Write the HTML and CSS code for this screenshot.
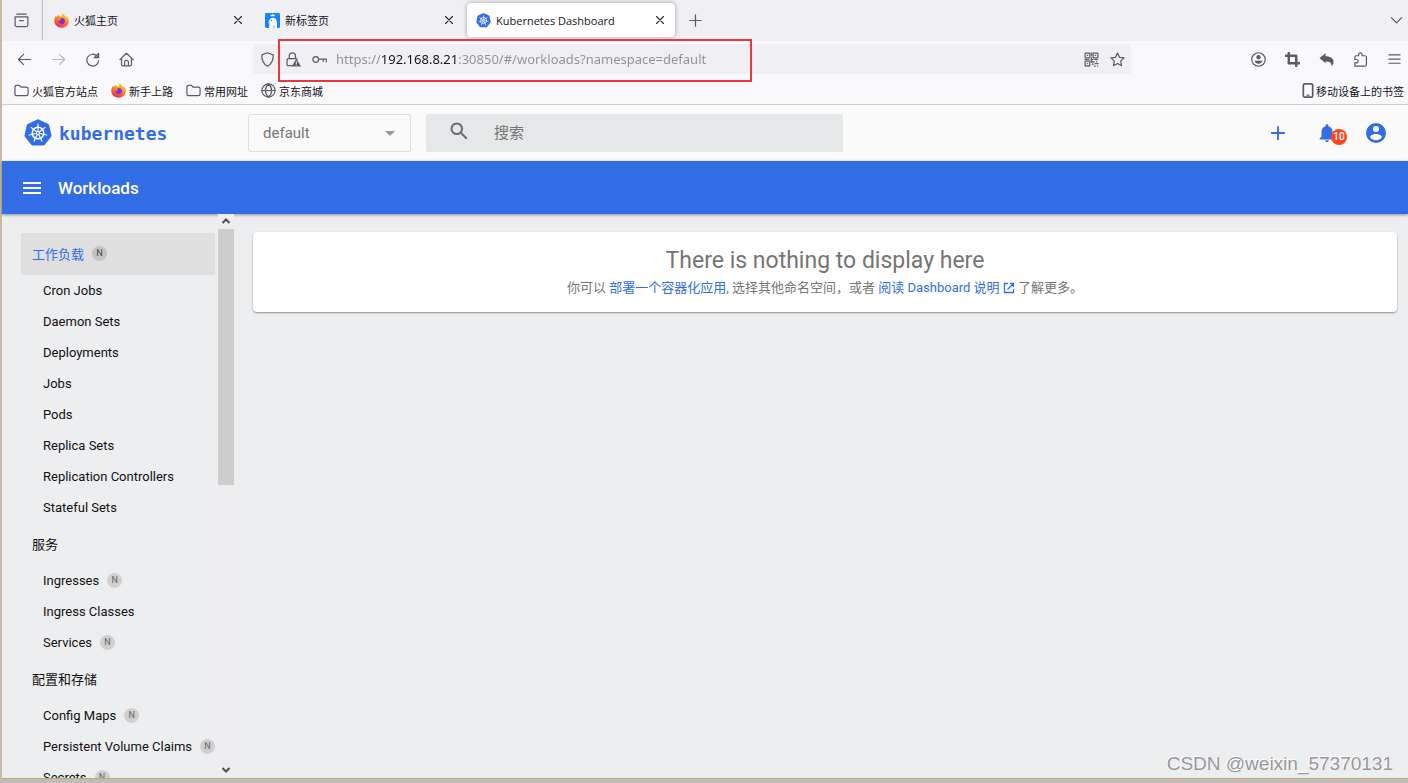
FILE: index.html
```html
<!DOCTYPE html>
<html lang="zh-CN">
<head>
<meta charset="utf-8">
<title>Kubernetes Dashboard</title>
<link rel="stylesheet" href="styles.css">
</head>
<body>
<svg class="defs" aria-hidden="true">
  <defs>
    <linearGradient id="flame" x1="0.8" y1="0" x2="0.3" y2="1">
      <stop offset="0" stop-color="#ffe03a"/><stop offset="0.45" stop-color="#ff8a1f"/><stop offset="1" stop-color="#f5215c"/>
    </linearGradient>
    <symbol id="firefox" viewBox="0 0 16 16">
      <path fill="url(#flame)" d="M9.5.3c1.200.9 1.700 2 2 3 .8.300 1.300.9 1.500 1.500.3-.3.4-.9.300-1.400C15 4.800 15.800 6.700 15.800 8.500c0 4-3.400 7.200-7.700 7.200S.3 12.500.3 8.300c0-2.300.9-3.900 1.900-5.400 0 .6.200 1.100.5 1.400C3.400 3 4.400 2.300 5.400 1.800c-.1.700.2 1.500.7 1.900.9-.2 1.700 0 2.300.3C8.200 2.700 8.500 1.300 9.500.3z"/>
      <circle cx="8.300" cy="8.600" r="3.300" fill="#7a35d8"/>
      <path fill="#ff9f24" d="M4.200 6.500c1.400-1.300 3-.8 3.800.1-1.800.1-2 1-1.900 1.700-1 0-1.700-.8-1.900-1.800z"/>
    </symbol>
    <symbol id="k8s" viewBox="-14 -14 28 28">
      <path fill="#326de6" stroke="#326de6" stroke-width="3.600" stroke-linejoin="round" d="M0-12L9.400-7.500 11.700 2.700 5.200 10.800H-5.200L-11.700 2.700-9.400-7.500z"/>
      <g fill="none" stroke="#fff" stroke-width="1.200" stroke-linecap="round">
        <circle r="5.800" stroke-width="1.500"/>
        <path d="M0 0V-9M0 0L7-5.600M0 0L8.800 2M0 0L3.900 8.100M0 0L-3.900 8.100M0 0L-8.800 2M0 0L-7-5.600"/>
      </g>
      <circle r="1.900" fill="#fff"/><circle r=".9" fill="#326de6"/>
    </symbol>
    <symbol id="close" viewBox="0 0 16 16"><path d="M4 4l8 8M12 4l-8 8"/></symbol>
    <symbol id="folder" viewBox="0 0 16 16"><path d="M1 4.200Q1 2.500 2.700 2.500h3l2 2h5.600q1.700 0 1.700 1.700v5.600q0 1.700-1.700 1.700H2.700Q1 13.500 1 11.800z"/></symbol>
  </defs>
</svg>

<div class="window">
  <div class="tabstrip">
    <button class="icon-btn recent" aria-label="最近浏览"><svg class="line" viewBox="0 0 16 16"><path d="M3 1.200h10M1.200 4.200h13.600v8.300q0 2-2 2H3.200q-2 0-2-2zM6 8.200h4"/></svg></button>
    <div class="tabs">
      <div class="tab">
        <svg class="favicon"><use href="#firefox"/></svg><span class="tab-title">火狐主页</span>
        <button class="tab-close" aria-label="关闭"><svg class="line"><use href="#close"/></svg></button>
      </div>
      <div class="tab">
        <svg class="favicon" viewBox="0 0 16 16"><rect width="16" height="16" rx="1.500" fill="#1684fc"/><path fill="#fff" d="M5.800 1.200l1.200.9L8.200 1l1.200 1.100 1.200-.9-.4 2.300H6.200zM4.300 16c0-2 .5-3.600.4-5.300C3.500 10.600 3.300 9.200 4.300 8.700 4.800 6.400 6.300 5 8.400 5c2.700 0 4.300 2 4.300 4.800V16z"/><path fill="#a9d3ff" d="M8 16c0-2 1-3.500 2.400-3.500V16z"/><circle cx="6.900" cy="8" r=".7" fill="#1684fc"/></svg><span class="tab-title">新标签页</span>
        <button class="tab-close" aria-label="关闭"><svg class="line"><use href="#close"/></svg></button>
      </div>
      <div class="tab tab-active">
        <svg class="favicon"><use href="#k8s"/></svg><span class="tab-title">Kubernetes Dashboard</span>
        <button class="tab-close" aria-label="关闭"><svg class="line"><use href="#close"/></svg></button>
      </div>
    </div>
    <button class="icon-btn" aria-label="新建标签页"><svg class="line" viewBox="0 0 16 16"><path d="M8 2v12M2 8h12"/></svg></button>
    <button class="icon-btn push" aria-label="列出所有标签页"><svg class="line" viewBox="0 0 16 16"><path d="M2.500 5l5.500 5.500L13.500 5"/></svg></button>
  </div>

  <div class="toolbar">
    <div class="nav-buttons">
      <button class="icon-btn" aria-label="后退"><svg class="line" viewBox="0 0 16 16"><path d="M14.500 8H1.500M7 2.500L1.500 8 7 13.500"/></svg></button>
      <button class="icon-btn dim" aria-label="前进" disabled><svg class="line" viewBox="0 0 16 16"><path d="M1.500 8h13M9 2.500L14.500 8 9 13.500"/></svg></button>
      <button class="icon-btn" aria-label="刷新"><svg class="line" viewBox="0 0 16 16"><path d="M14.500 9.500A6.300 6.300 0 1 1 12.700 4.200L14 5.500M14.500 1.500v4.500H10z"/></svg></button>
      <button class="icon-btn" aria-label="主页"><svg class="line" viewBox="0 0 16 16"><path d="M1 8.200L8 1.300l7 6.900M2.700 7v6q0 1.700 1.700 1.700h7.200q1.700 0 1.700-1.700V7M6 14.500v-4q0-1.500 2-1.500t2 1.500v4"/></svg></button>
    </div>
    <div class="urlbar">
      <svg class="line shield" viewBox="0 0 16 16"><path d="M8 .8l6 2.300c.4 5.400-1.600 9.600-6 12.100C3.600 12.700 1.600 8.500 2 3.100z"/></svg>
      <svg class="line lock" viewBox="0 0 16 16"><path d="M3.500 7V4.300a3.300 3.300 0 0 1 6.600 0V7M6.500 14.500H2.600q-1.500 0-1.500-1.500V8.500Q1.100 7 2.600 7h8q1 0 1.300.6"/><path class="solid" d="M11 7.200l4.900 8.300H6.100z"/><path stroke="#fff" stroke-width="1" d="M11 10.500v2M11 14v.2"/></svg>
      <svg class="line key" viewBox="0 0 16 16"><circle cx="4" cy="8" r="3"/><path d="M7 7.500h8.200v3M12 7.500v2.500"/></svg>
      <input class="url" type="text" aria-label="地址" value="https://192.168.8.21:30850/#/workloads?namespace=default">
      <button class="icon-btn" aria-label="二维码"><svg class="line" viewBox="0 0 16 16"><path d="M1.200 1.200h5v5h-5zM9.800 1.200h5v5h-5zM1.200 9.800h5v5h-5zM3.500 3.700h.4M12 3.700h.4M3.500 12.300h.4M8 1v3M1 8h4M7.500 8h2M11.500 8h3M9 10.500h2M12 12.500h3M9 13h1M11 15h1M14.500 15v.2M13.500 10v.3M8 6v5"/></svg></button>
      <button class="icon-btn" aria-label="收藏"><svg class="line" viewBox="0 0 16 16"><path d="M8 1.200l2.100 4.500 4.900.6-3.600 3.400.9 4.900L8 12.200l-4.300 2.400.9-4.900L1 6.300l4.900-.6z"/></svg></button>
      <div class="highlight"></div>
    </div>
    <div class="nav-buttons">
      <button class="icon-btn" aria-label="账户"><svg class="line" viewBox="0 0 16 16"><circle cx="8" cy="8" r="7.200"/><circle class="solid" cx="8" cy="5.600" r="2.300"/><path class="solid" d="M3.800 9.300h8.400c-.5 2.200-2.200 3.200-4.200 3.200s-3.700-1-4.200-3.200z"/></svg></button>
      <button class="icon-btn" aria-label="截图"><svg class="line" viewBox="0 0 16 16"><path stroke-width="2.600" d="M4 1v11h11M1 4h11v11"/></svg></button>
      <button class="icon-btn" aria-label="撤销"><svg class="line" viewBox="0 0 16 16"><path class="solid" d="M.5 6.500L7 1.200V4.500c5.500 0 8.500 2.500 8.500 6 0 2.200-1 3.800-2.200 4.700.3-3.900-1.800-5.200-6.300-5.200V12z"/></svg></button>
      <button class="icon-btn" aria-label="扩展"><svg class="line" viewBox="0 0 16 16"><path d="M2 6.500V5.300q0-1.300 1.300-1.300H6V2.700a1.800 1.800 0 0 1 3.600 0V4h3q1.700 0 1.700 1.700v7.600q0 1.700-1.700 1.700H2v-3.500h1.700a1.700 1.700 0 0 0 0-3.500H2z"/></svg></button>
      <button class="icon-btn" aria-label="菜单"><svg class="line" viewBox="0 0 16 16"><path d="M2 3h12M2 7.500h12M2 12h12"/></svg></button>
    </div>
  </div>

  <div class="bookmarks">
    <a class="bookmark" href="#"><svg class="line"><use href="#folder"/></svg>火狐官方站点</a>
    <a class="bookmark" href="#"><svg><use href="#firefox"/></svg>新手上路</a>
    <a class="bookmark" href="#"><svg class="line"><use href="#folder"/></svg>常用网址</a>
    <a class="bookmark" href="#"><svg class="line" viewBox="0 0 16 16"><circle cx="8" cy="8" r="7"/><path d="M1 8h14M8 1c-4.500 4-4.500 10 0 14M8 1c4.500 4 4.500 10 0 14"/></svg>京东商城</a>
    <a class="bookmark mobile" href="#"><svg class="line phone" viewBox="0 0 12 16"><rect x="1" y="1" width="10" height="14" rx="1.500" stroke-width="1.800"/><path d="M5 13h2"/></svg>移动设备上的书签</a>
  </div>

  <header class="app-header">
    <a class="brand" href="#"><svg class="brand-logo"><use href="#k8s"/></svg><span>kubernetes</span></a>
    <div class="namespace">
      <select aria-label="命名空间"><option>default</option></select>
      <svg class="caret" viewBox="0 0 10 5"><path fill="#999" d="M0 0h10L5 5z"/></svg>
    </div>
    <label class="search">
      <svg viewBox="0 0 18 18" fill="none" stroke="#6c6d6e" stroke-width="2"><circle cx="6.800" cy="6.800" r="5.300"/><path d="M10.800 10.800l6 6"/></svg>
      <input type="text" placeholder="搜索" aria-label="搜索">
    </label>
    <div class="actions">
      <button class="action" aria-label="创建"><svg viewBox="0 0 24 24"><path d="M19.500 13h-6.500v6.500h-2V13H4.500v-2H11V4.500h2V11h6.500z"/></svg></button>
      <button class="action" aria-label="通知"><svg viewBox="0 0 24 24"><path d="M12 22c1.100 0 2-.9 2-2h-4c0 1.100.9 2 2 2zm6-6v-5c0-3.100-1.600-5.600-4.500-6.300V4a1.500 1.500 0 0 0-3 0v.7C7.600 5.400 6 7.900 6 11v5l-2 2v1h16v-1z"/></svg><span class="count">10</span></button>
      <button class="action" aria-label="用户"><svg viewBox="1 1 22 22"><path d="M12 2a10 10 0 1 0 0 20 10 10 0 0 0 0-20zm0 3a3 3 0 1 1 0 6 3 3 0 0 1 0-6zm0 14.200a7.200 7.200 0 0 1-6-3.200c0-2 4-3.100 6-3.100s6 1.100 6 3.100a7.200 7.200 0 0 1-6 3.200z"/></svg></button>
    </div>
  </header>

  <div class="titlebar">
    <button class="menu" aria-label="菜单"><svg viewBox="0 0 18 12"><path fill="#fff" d="M0 0h18v2H0zM0 5h18v2H0zM0 10h18v2H0z"/></svg></button>
    <h1>Workloads</h1>
  </div>

  <div class="body">
    <nav class="sidebar">
      <a class="group active" href="#">工作负载<span class="badge">N</span></a>
      <a class="item" href="#">Cron Jobs</a>
      <a class="item" href="#">Daemon Sets</a>
      <a class="item" href="#">Deployments</a>
      <a class="item" href="#">Jobs</a>
      <a class="item" href="#">Pods</a>
      <a class="item" href="#">Replica Sets</a>
      <a class="item" href="#">Replication Controllers</a>
      <a class="item" href="#">Stateful Sets</a>
      <a class="group" href="#">服务</a>
      <a class="item" href="#">Ingresses<span class="badge">N</span></a>
      <a class="item" href="#">Ingress Classes</a>
      <a class="item" href="#">Services<span class="badge">N</span></a>
      <a class="group" href="#">配置和存储</a>
      <a class="item" href="#">Config Maps<span class="badge">N</span></a>
      <a class="item" href="#">Persistent Volume Claims<span class="badge">N</span></a>
      <a class="item" href="#">Secrets<span class="badge">N</span></a>
    </nav>
    <div class="scrollbar" aria-hidden="true">
      <svg viewBox="0 0 10 6"><path d="M1.500 5L5 1.500 8.500 5"/></svg>
      <div class="track"><div class="thumb"></div></div>
      <svg viewBox="0 0 10 6"><path d="M1.500 1L5 4.500 8.500 1"/></svg>
    </div>
    <main class="content">
      <section class="card">
        <h2>There is nothing to display here</h2>
        <p>你可以 <a href="#">部署一个容器化应用</a>, 选择其他命名空间，或者 <a href="#">阅读 Dashboard 说明 <svg class="external" viewBox="0 0 12 12"><path d="M5 1.500H1.500v9h9V7M7 1.500h3.500V5M10.500 1.500L4.500 7.500"/></svg></a> 了解更多。</p>
      </section>
    </main>
    <div class="watermark">CSDN @weixin_57370131</div>
  </div>
</div>
</body>
</html>
```

FILE: styles.css
```css
* { box-sizing: border-box; }

body {
  margin: 0;
  height: 100vh;
  display: flex;
  padding: 0 0 4px 1px;
  background: #bdbdbe;
  overflow: hidden;
  font-family: "Open Sans", "Noto Sans CJK SC", sans-serif;
  font-size: 12px;
  color: #15141a;
  white-space: nowrap;
}

a { color: inherit; text-decoration: none; }
button { border: 0; padding: 0; background: none; font: inherit; color: inherit; }
svg { display: block; flex: none; }
.defs { position: absolute; width: 0; height: 0; }

.line { fill: none; stroke: #5b5b66; stroke-width: 1.3; stroke-linecap: round; stroke-linejoin: round; }
.line .solid { fill: #5b5b66; stroke: none; }

.window {
  flex: 1;
  min-width: 0;
  display: flex;
  flex-direction: column;
  border-left: 1px solid #d8b68c;
  border-bottom: 1px solid #cda468;
  background: #edeef0;
}

/* Browser chrome */
.icon-btn { flex: none; width: 24px; height: 24px; display: grid; place-items: center; }
.icon-btn svg { width: 15px; height: 15px; }
.dim { opacity: 0.4; }
.push { margin-left: auto; }

.tabstrip { height: 41px; display: flex; align-items: center; padding-bottom: 1px; background: #f0eff4; }
.recent { width: 41px; height: 40px; padding-right: 2px; border-right: 1px solid #bdbcc4; }
.tabs { display: flex; gap: 3px; margin: 0 8px 0 2px; }
.tab { width: 208px; height: 34px; display: flex; align-items: center; gap: 5px; padding: 0 7px 0 9px; border-radius: 4px; }
.tab-active { background: #fff; box-shadow: 0 0 4px rgba(0, 0, 0, 0.35); }
.favicon { width: 15px; height: 15px; }
.tab-title { flex: 1; font-size: 11px; }
.tab-close { width: 16px; height: 16px; display: grid; place-items: center; }
.tab-close svg { width: 14px; height: 14px; stroke: #2b2a33; }

.toolbar { height: 38px; display: flex; align-items: center; padding: 0 2px 2px 10px; background: #f9f9fb; }
.nav-buttons { display: flex; gap: 10px; }
.urlbar {
  position: relative;
  flex: 1;
  height: 30px;
  display: flex;
  align-items: center;
  margin: 0 115px;
  padding: 0 2px 0 7px;
  border-radius: 4px;
  background: #f0eff4;
}
.urlbar .line { width: 15px; height: 15px; }
.lock { margin-left: 11px; }
.key { margin: 0 9px 0 11px; }
.url {
  flex: 1;
  min-width: 0;
  border: 0;
  padding: 0;
  outline: 0;
  font-family: "Noto Sans", sans-serif;
  font-size: 13px;
  line-height: 20px;
  color: transparent;
  background: linear-gradient(to right, #8f8f96 46px, #15141a 46px, #15141a 123px, #8f8f96 123px);
  -webkit-background-clip: text;
  background-clip: text;
}
.urlbar .icon-btn + .icon-btn { margin-left: 2px; }
.highlight { position: absolute; left: 25px; top: -5px; width: 474px; height: 43px; border: 2px solid #e8373e; pointer-events: none; }

.bookmarks { height: 26px; display: flex; align-items: center; gap: 13px; padding: 0 4px 2px 12px; border-bottom: 1px solid #cfcfd2; background: #f9f9fb; }
.bookmark { display: flex; align-items: center; gap: 3px; font-size: 11px; }
.bookmark svg { width: 15px; height: 15px; }
.mobile { margin-left: auto; gap: 2px; }
.bookmark .phone { width: 12px; }

/* Dashboard */
.app-header { height: 56px; display: flex; align-items: center; padding: 0 21px 0 22px; background: #fafafa; font-family: Roboto, "Noto Sans CJK SC", sans-serif; }
.brand { width: 224px; display: flex; align-items: center; gap: 7px; color: #326de6; font: bold 18px "DejaVu Sans Mono", monospace; }
.brand-logo { width: 28px; height: 28px; }
.namespace { position: relative; margin-right: 15px; }
.namespace select {
  appearance: none;
  display: block;
  width: 163px;
  height: 38px;
  padding: 0 14px;
  border: 1px solid #dedede;
  border-radius: 2px;
  background: #fafafa;
  color: #767676;
  font: 15px Roboto, sans-serif;
}
.caret { position: absolute; right: 16px; top: 17px; width: 10px; height: 5px; }
.search { flex: 0 1 417px; height: 38px; display: flex; align-items: center; gap: 26px; padding: 0 24px; border-radius: 2px; background: #e4e8e8; }
.search svg { width: 18px; height: 18px; margin-bottom: 4px; }
.search input { flex: 1; min-width: 0; border: 0; padding: 0; outline: 0; background: none; font: 15px Roboto, "Noto Sans CJK SC", sans-serif; }
.search input::placeholder { color: #757575; }
.actions { margin-left: auto; display: flex; gap: 27px; }
.action { position: relative; width: 22px; height: 22px; fill: #326de6; }
.action svg { width: 22px; height: 22px; }
.count { position: absolute; left: 15px; top: 7px; width: 16px; height: 16px; border-radius: 8px; background: #ff4420; color: #fff; font: 500 10px/16px Roboto, sans-serif; text-align: center; }

.titlebar { position: relative; height: 53px; display: flex; align-items: center; gap: 17px; padding: 0 21px; background: #326de6; box-shadow: 0 1px 3px rgba(0, 0, 0, 0.4); }
.menu svg { width: 18px; height: 12px; }
.titlebar h1 { margin: 0; color: #fff; font: 500 17px Roboto, sans-serif; }

.body { position: relative; flex: 1; min-height: 0; display: flex; font-family: Roboto, "Noto Sans CJK SC", sans-serif; font-size: 13px; color: #111; }
.sidebar { width: 216px; padding: 19px 0 0 19px; overflow: hidden; }
.group, .item { display: flex; align-items: center; gap: 8px; }
.group { height: 42px; padding: 0 0 2px 11px; margin-right: 3px; border-radius: 2px; }
.item { height: 31px; padding-left: 22px; }
.active { background: #dfdfdf; color: #326de6; }
.badge { width: 15px; height: 15px; border-radius: 8px; background: #d0d0d1; color: #666; font: 9px/15px Roboto, sans-serif; text-align: center; }
.active .badge { background: #c3c3c3; color: #444; }

.scrollbar { width: 16px; display: flex; flex-direction: column; align-items: center; gap: 5px; padding: 4px 0 5px; background: #eeeef0; }
.scrollbar svg { width: 10px; height: 6px; fill: none; stroke: #505050; stroke-width: 2; }
.track { flex: 1; width: 16px; }
.thumb { height: 48%; background: #cdcdcd; }

.content { flex: 1; padding: 18px 11px 0 19px; }
.card { padding: 15px 14px 13px; border-radius: 4px; background: #fff; box-shadow: 0 1px 2px rgba(0, 0, 0, 0.4); text-align: center; color: #757575; }
.card h2 { margin: 0; font: 400 23px/28px Roboto, sans-serif; }
.card p { margin: 2px 0 0; line-height: 22px; }
.card a { color: #326de6; }
.external { display: inline-block; width: 12px; height: 12px; vertical-align: -2px; fill: none; stroke: #326de6; stroke-width: 1.3; }

.watermark { position: absolute; right: 15px; bottom: 1px; color: #97989a; text-shadow: -1px -1px 0 #fff; font: 19px/26px "Liberation Sans", sans-serif; }
```
